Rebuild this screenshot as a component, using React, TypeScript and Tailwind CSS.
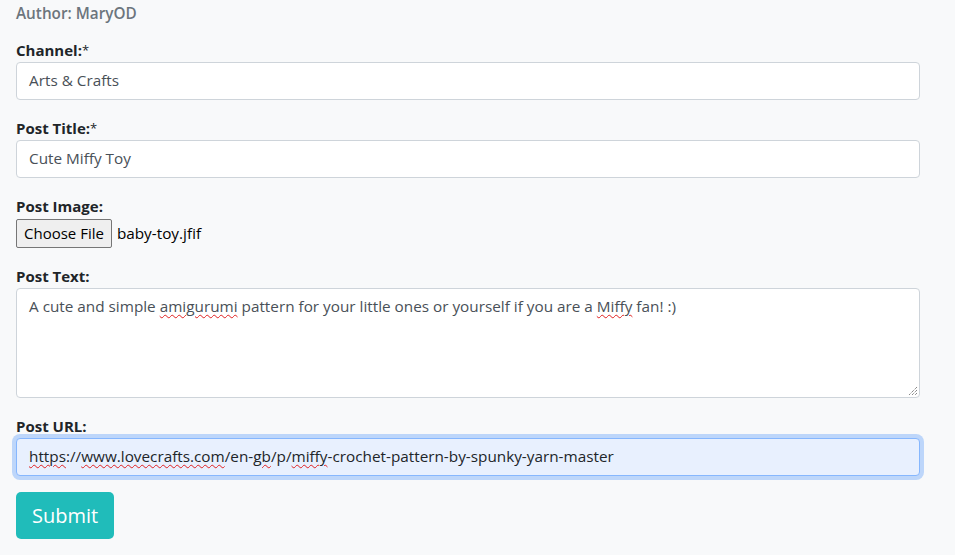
import React from "react";

const font = { fontFamily: '"Open Sans", "Noto Sans", Arial, sans-serif' };

function Sp({ children }: { children: React.ReactNode }) {
  return (
    <span className="underline decoration-wavy decoration-[#e02020] decoration-1 underline-offset-[2px]">
      {children}
    </span>
  );
}

function Label({ text, req }: { text: string; req?: boolean }) {
  return (
    <div className="h-6 leading-6 text-[15px] font-bold text-[#212529]">
      {text}
      {req && <span className="align-top text-[13px] font-normal text-[#212529]">*</span>}
    </div>
  );
}

export default function App() {
  return (
    <div className="min-h-[555px] w-[955px] bg-[#f8f9fa] px-4 text-[#212529]" style={font}>
      <div className="h-[26px] pt-[1px] leading-6 text-[15.3px] font-semibold text-[#6c757d]">Author: MaryOD</div>
      <div className="h-3" />
      <div className="w-[904px]">
        <Label text="Channel:" req />
        <div className="mb-4 h-[38px] rounded border border-[#ced4da] bg-white px-3 text-[15.3px] leading-[35px] text-[#495057]">
          Arts &amp; Crafts
        </div>
        <Label text="Post Title:" req />
        <div className="mb-4 h-[38px] rounded border border-[#ced4da] bg-white px-3 text-[15.3px] leading-[35px] text-[#495057]">
          Cute Miffy Toy
        </div>
        <Label text="Post Image:" />
        <div className="mb-4 flex h-[30px] items-center gap-[5px] pt-[1px]">
          <div className="flex h-[29px] items-center rounded-[2px] border border-[#767676] bg-[#efefef] px-[7px] text-[15px] text-black">
            Choose File
          </div>
          <span className="text-[15.3px] text-black">baby-toy.jfif</span>
        </div>
        <Label text="Post Text:" />
        <div className="relative mb-4 h-[110px] rounded border border-[#ced4da] bg-white px-3 pt-[5px] text-[15.3px] leading-6 text-[#495057]">
          A cute and simple <Sp>amigurumi</Sp> pattern for your little ones or yourself if you are a <Sp>Miffy</Sp> fan! :)
          <svg className="absolute bottom-[1px] right-[1px]" width="10" height="10" viewBox="0 0 10 10">
            <path d="M9 1 L1 9 M9 4 L4 9 M9 7 L7 9" stroke="#555" strokeWidth="1" strokeDasharray="1 1" />
          </svg>
        </div>
        <Label text="Post URL:" />
        <div className="mb-4 h-[38px] rounded border border-[#86b7fe] bg-[#e8f0fe] px-3 text-[15.3px] leading-[35px] text-[#212529] shadow-[0_0_0_4px_rgba(13,110,253,0.25)]">
          <Sp>https</Sp>://<Sp>www.lovecrafts.com</Sp>/en-<Sp>gb</Sp>/p/<Sp>miffy</Sp>-crochet-pattern-by-spunky-yarn-master
        </div>
        <button className="h-[47px] rounded-[5px] bg-[#20bcba] px-4 text-[20px] leading-[30px] text-white">
          Submit
        </button>
      </div>
    </div>
  );
}
